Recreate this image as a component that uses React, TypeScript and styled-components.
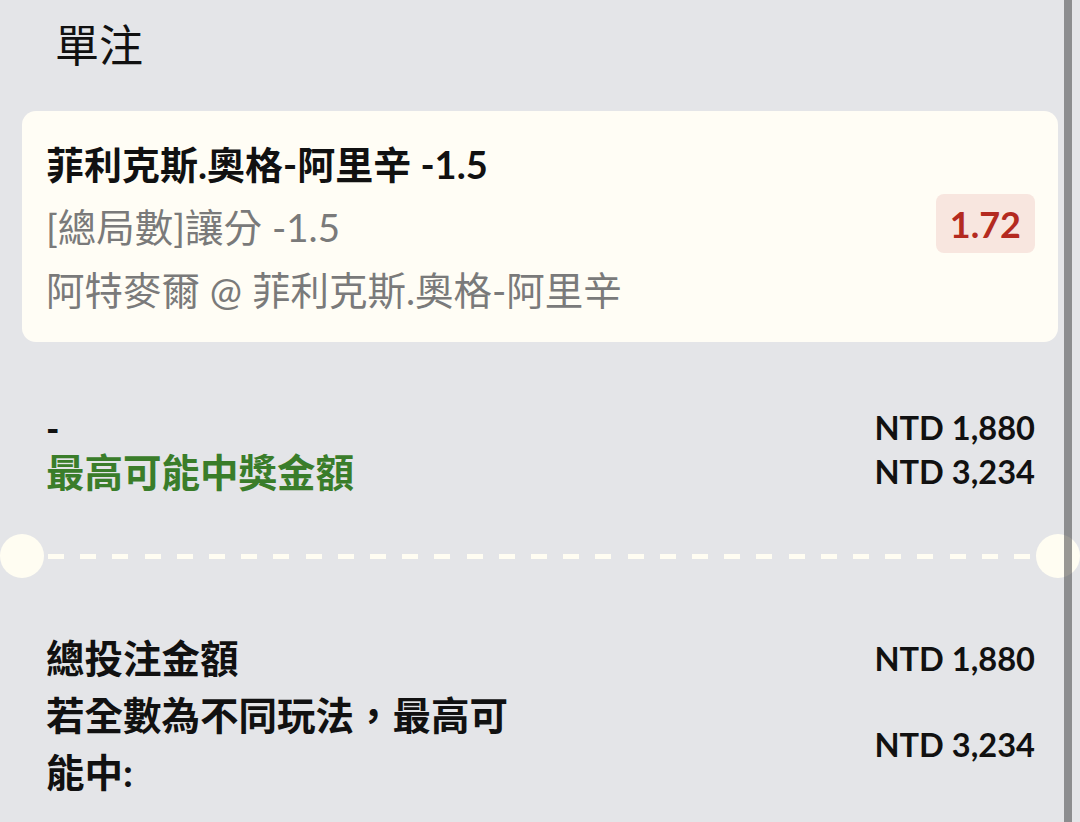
import styled, { createGlobalStyle } from "styled-components";

const GlobalStyle = createGlobalStyle`
  html, body {
    margin: 0;
    padding: 0;
    background: #e4e5e8;
  }
  body {
    font-family: Lato, "Noto Sans CJK TC", "Noto Sans", sans-serif;
    color: #111;
  }
`;

const Page = styled.div`
  position: relative;
  height: 822px;
  overflow: hidden;
  padding: 15px 22px 0;
  box-sizing: border-box;
`;

const ScrollBar = styled.div`
  position: absolute;
  top: 0;
  bottom: 0;
  left: 1064px;
  width: 8px;
  background: rgba(60, 60, 62, 0.52);
  z-index: 2;
`;

const Heading = styled.h1`
  margin: 0;
  padding-left: 33px;
  font-size: 44px;
  font-weight: 400;
  line-height: 60px;
`;

const BetCard = styled.div`
  margin-top: 36px;
  display: flex;
  align-items: center;
  padding: 22px 23px 20px 24px;
  background: #fffdf5;
  border-radius: 14px;
`;

const BetInfo = styled.div`
  flex: 1;
  min-width: 0;
`;

const BetLine = styled.div<{ $strong?: boolean }>`
  font-size: ${(p) => (p.$strong ? "38px" : "38.5px")};
  font-weight: ${(p) => (p.$strong ? 700 : 400)};
  color: ${(p) => (p.$strong ? "#111" : "#7a7a7a")};
  line-height: 63px;
  white-space: nowrap;
`;

const Odds = styled.div`
  display: flex;
  align-items: center;
  height: 59px;
  padding: 0 14px;
  margin-bottom: 8px;
  border-radius: 8px;
  background: #f8e6df;
  color: #b42a20;
  font-size: 36px;
  font-weight: 700;
`;

const Summary = styled.div<{ $lineHeight: number }>`
  display: grid;
  grid-template-columns: 1fr auto;
  align-items: center;
  padding: 0 23px 0 24px;
  line-height: ${(p) => p.$lineHeight}px;
`;

const Label = styled.div<{ $tone?: "green" | "dash" }>`
  max-width: 480px;
  font-size: ${(p) => (p.$tone === "dash" ? "36px" : "38.5px")};
  font-weight: ${(p) => (p.$tone === "dash" ? 900 : 700)};
  color: ${(p) => (p.$tone === "green" ? "#3a7d2a" : "#111")};
`;

const Amount = styled.div`
  text-align: right;
  font-size: 32.6px;
  font-weight: 700;
  color: #111;
  white-space: nowrap;
`;

const Divider = styled.div`
  display: flex;
  align-items: center;
  margin: 40px -22px 52px;
`;

const Notch = styled.div`
  width: 44px;
  height: 44px;
  border-radius: 50%;
  background: #fffdf2;
  flex: none;
`;

const DashLine = styled.div`
  flex: 1;
  height: 5px;
  margin: 0 6px 0 4px;
  background: repeating-linear-gradient(
    90deg,
    #fffdf2 0 16px,
    transparent 16px 32.2px
  );
`;

const App = () => {
  return (
    <>
      <GlobalStyle />
      <Page>
        <Heading>單注</Heading>

        <BetCard>
          <BetInfo>
            <BetLine $strong>菲利克斯.奧格-阿里辛 -1.5</BetLine>
            <BetLine>[總局數]讓分 -1.5</BetLine>
            <BetLine>阿特麥爾 @ 菲利克斯.奧格-阿里辛</BetLine>
          </BetInfo>
          <Odds>1.72</Odds>
        </BetCard>

        <div style={{ marginTop: 64 }}>
          <Summary $lineHeight={44}>
            <Label $tone="dash">-</Label>
            <Amount>NTD 1,880</Amount>
            <Label $tone="green">最高可能中獎金額</Label>
            <Amount>NTD 3,234</Amount>
          </Summary>
        </div>

        <Divider>
          <Notch />
          <DashLine />
          <Notch />
        </Divider>

        <Summary $lineHeight={57}>
          <Label>總投注金額</Label>
          <Amount>NTD 1,880</Amount>
          <Label>若全數為不同玩法，最高可能中:</Label>
          <Amount>NTD 3,234</Amount>
        </Summary>

        <ScrollBar />
      </Page>
    </>
  );
};

export default App;
